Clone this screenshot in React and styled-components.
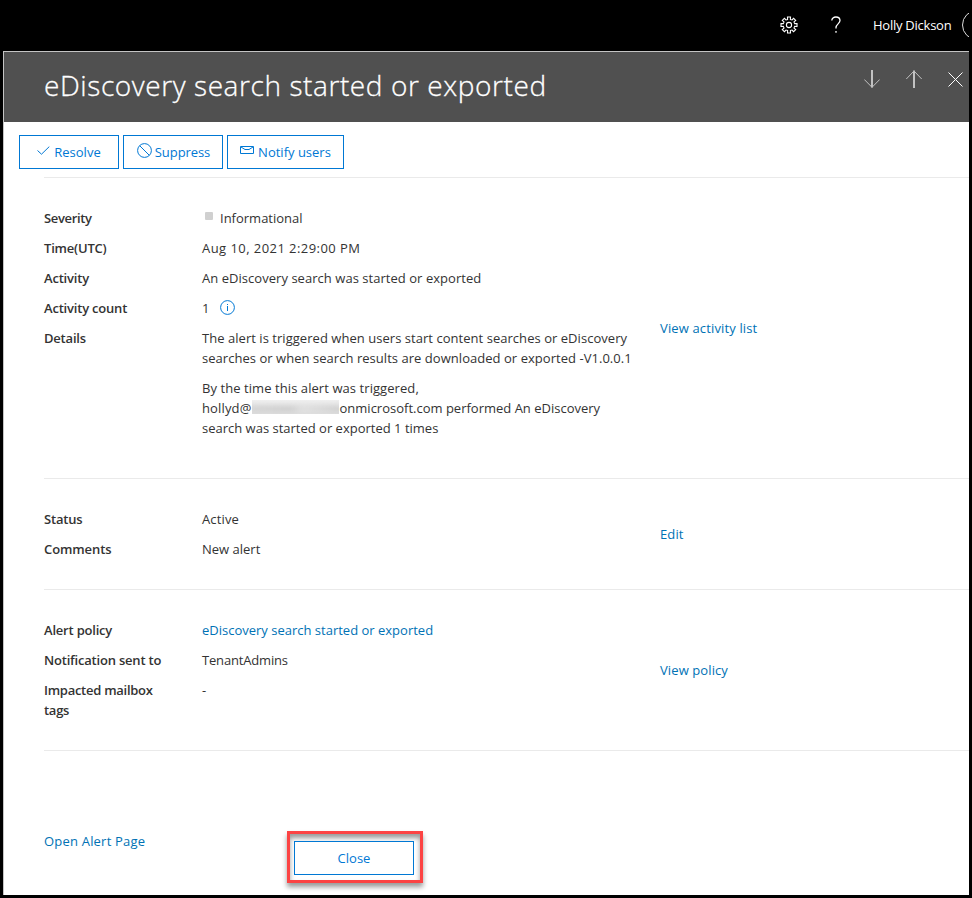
import React from "react";
import styled, { createGlobalStyle } from "styled-components";

const GlobalStyle = createGlobalStyle`
  * { box-sizing: border-box; }
  body {
    margin: 0;
    background: #000;
    color: #333;
    font: 13px/20px "Open Sans", "Noto Sans", sans-serif;
    overflow: hidden;
  }
`;

const Page = styled.div`
  width: 972px;
  height: 898px;
  display: flex;
  flex-direction: column;
  background: #000;
  overflow: hidden;
`;

const TopBar = styled.header`
  width: 969px;
  height: 51px;
  flex: none;
  display: flex;
  align-items: center;
  padding-left: 780px;
  padding-bottom: 1px;
  color: #fff;
  overflow: hidden;
`;

const Glyph = styled.svg`
  display: block;
  flex: none;
  fill: none;
  stroke: currentColor;
  stroke-width: ${(p) => p.$stroke || 1};
  margin: ${(p) => p.$margin || 0};
`;

const Text = styled.span`
  white-space: nowrap;
  letter-spacing: ${(p) => p.$track || 0}px;
`;

const UserName = styled(Text)`
  margin-left: 32px;
  width: 79px;
`;

const Avatar = styled.div`
  flex: none;
  width: 30px;
  height: 30px;
  margin-left: 11px;
  border: 1px solid #ddd;
  border-radius: 50%;
`;

const Panel = styled.main`
  width: 966px;
  height: 844px;
  margin-left: 3px;
  display: flex;
  flex-direction: column;
  background: #fff;
  border: solid #c4c4c4;
  border-width: 1px 0 0 1px;
`;

const TitleBar = styled.div`
  height: 70px;
  flex: none;
  display: flex;
  align-items: flex-start;
  padding-left: 40px;
  background: #505050;
  color: #fff;
`;

const Title = styled.h1`
  flex: 1;
  margin: 12px 0 0;
  font-size: 28px;
  line-height: 42px;
  font-weight: 300;
  letter-spacing: ${(p) => p.$track}px;
  -webkit-text-stroke: 0.3px #fff;
  white-space: nowrap;
`;

const Nav = styled.div`
  display: flex;
  padding-top: 18px;
  color: ${(p) => p.$color};
`;

const Toolbar = styled.div`
  display: flex;
  gap: 4px;
  padding: 13px 0 8px 15px;
  flex: none;
`;

const Button = styled.button`
  display: flex;
  align-items: center;
  justify-content: center;
  width: ${(p) => p.$width}px;
  height: 34px;
  padding: 0;
  border: 1px solid #0078d4;
  background: #fff;
  color: #0078d4;
  font: inherit;
`;

const Section = styled.section`
  flex: none;
  display: flex;
  align-items: center;
  margin-left: 40px;
  padding: 30px 0;
  min-height: ${(p) => p.$height}px;
  border-top: 1px solid #eaeaea;
`;

const Fields = styled.dl`
  margin: 0;
  width: 616px;
  display: grid;
  grid-template-columns: 158px 1fr;
  row-gap: 10px;
`;

const Label = styled.dt`
  width: 130px;
  color: #333;
  font-weight: 600;
  letter-spacing: ${(p) => p.$track || -0.2}px;
`;

const Value = styled.dd`
  margin: 0;
  display: flex;
  flex-direction: ${(p) => (p.$stack ? "column" : "row")};
  align-items: ${(p) => (p.$stack ? "flex-start" : "center")};
`;

const Paragraph = styled.p`
  margin: 0 0 10px;
`;

const Line = styled(Text)`
  display: flex;
  height: 20px;
`;

const Redacted = styled.span`
  width: 87px;
  height: 14px;
  margin: 2px 1px 0 0;
  overflow: hidden;
  background: linear-gradient(#efefef, #e2e2e2 60%, #dedede);

  &::before {
    content: "";
    display: block;
    width: 92px;
    height: 6px;
    margin: 6px 0 0 -3px;
    background: linear-gradient(90deg, #d4d4d4, #cecece 45%, #e0e0e0 58%, #dadada 75%, #cecece);
    filter: blur(2.5px);
  }
`;

const Swatch = styled.span`
  width: 8px;
  height: 8px;
  margin: -4px 7px 0 3px;
  border-radius: 1px;
  background: #d0d0d0;
`;

const Link = styled.a`
  color: #0072b5;
  white-space: nowrap;
  letter-spacing: ${(p) => p.$track || 0}px;
`;

const Footer = styled.footer`
  flex: 1;
  display: flex;
  align-items: flex-start;
  margin-left: 40px;
  padding-top: 80px;
  border-top: 1px solid #eaeaea;
`;

const OpenLink = styled(Link)`
  width: 243px;
`;

const Highlight = styled.div`
  width: 136px;
  height: 52px;
  padding: 7px 4px;
  border: 3px solid #fc4343;
  box-shadow: 0 4px 5px rgba(0, 0, 0, 0.4), inset 0 4px 5px rgba(0, 0, 0, 0.4);
`;

const teeth = Array.from({ length: 8 }, (_, i) => i * 45);

function Gear() {
  return (
    <Glyph width="18" height="18" viewBox="0 0 18 18" $stroke={1.1}>
      <circle cx="9" cy="9" r="2.6" />
      {teeth.map((a) => (
        <path
          key={a}
          transform={`rotate(${a} 9 9)`}
          d="M6.8 3.7 7.6 3.3 7.5 1H10.5L10.4 3.3 11.2 3.7"
        />
      ))}
    </Glyph>
  );
}

function Help() {
  return (
    <Glyph width="10" height="18" viewBox="0 0 10 18" $margin="0 0 0 33px" $stroke={1.3}>
      <path d="M.8 4.5C.8 2.2 2.6 1 4.9 1 7.4 1 9 2.3 9 4.6 9 7.8 5 8 5 11.6v1M5 15v1.7" />
    </Glyph>
  );
}

function Arrow({ up }) {
  return (
    <Glyph width="16" height="19" viewBox="0 0 16 19" $margin="0 26px 0 0">
      {up ? (
        <>
          <path d="M8 .5V18" strokeWidth="2" />
          <path d="M.3 9 8 1 15.7 9" />
        </>
      ) : (
        <>
          <path d="M8 0V17.5" strokeWidth="2" />
          <path d="M.3 9.5 8 17.3 15.7 9.5" />
        </>
      )}
    </Glyph>
  );
}

export default function App() {
  return (
    <>
      <GlobalStyle />
      <Page>
        <TopBar>
          <Gear />
          <Help />
          <UserName $track={-0.25}>Holly Dickson</UserName>
          <Avatar />
        </TopBar>
        <Panel>
          <TitleBar>
            <Title $track={0.59}>eDiscovery search started or exported</Title>
            <Nav $color="#c2c2c2">
              <Arrow />
              <Arrow up />
            </Nav>
            <Nav $color="#fff">
              <Glyph width="15" height="15" viewBox="0 0 15 15" $margin="2px 6px 0 0">
                <path d="M.5.5 14.5 14.5M14.5.5.5 14.5" />
              </Glyph>
            </Nav>
          </TitleBar>
          <Toolbar>
            <Button $width={100}>
              <Glyph width="13" height="9" viewBox="0 0 13 9" $margin="-4px 4px 0 0">
                <path d="M.5 4.5 4.5 8.2 12.3.6" />
              </Glyph>
              <Text>Resolve</Text>
            </Button>
            <Button $width={100}>
              <Glyph width="15" height="15" viewBox="0 0 15 15" $margin="-4px 3px 0 1px">
                <circle cx="7.5" cy="7.5" r="6.9" />
                <path d="M2.7 2.7 12.3 12.3" />
              </Glyph>
              <Text $track={-0.08}>Suppress</Text>
            </Button>
            <Button $width={117}>
              <Glyph width="14" height="8" viewBox="0 0 14 8" $margin="-4px 4px 0 0">
                <path d="M.5.5H13.5V7.5H.5ZM1 1 5 3.5H9L13 1" />
              </Glyph>
              <Text>Notify users</Text>
            </Button>
          </Toolbar>
          <Section $height={301}>
            <Fields>
              <Label $track={-0.35}>Severity</Label>
              <Value>
                <Swatch />
                <Text>Informational</Text>
              </Value>
              <Label>Time(UTC)</Label>
              <Value>
                <Text $track={0.44}>Aug 10, 2021 2:29:00 PM</Text>
              </Value>
              <Label>Activity</Label>
              <Value>
                <Text $track={0.04}>An eDiscovery search was started or exported</Text>
              </Value>
              <Label>Activity count</Label>
              <Value>
                <Text $track={0.5}>1</Text>
                <Glyph width="15" height="15" viewBox="0 0 15 15" $margin="-1px 0 0 10px">
                  <circle cx="7.5" cy="7.5" r="6.9" stroke="#0078d4" />
                  <path d="M7.5 6V11M7.5 4V5" stroke="#0078d4" />
                </Glyph>
              </Value>
              <Label>Details</Label>
              <Value $stack>
                <Paragraph>
                  <Line $track={0.04}>
                    The alert is triggered when users start content searches or eDiscovery
                  </Line>
                  <Line $track={0.04}>
                    searches or when search results are downloaded or exported -V1.0.0.1
                  </Line>
                </Paragraph>
                <Paragraph>
                  <Line $track={0.07}>By the time this alert was triggered,</Line>
                  <Line>
                    <Text $track={0.15}>hollyd@</Text>
                    <Redacted />
                    <Text>onmicrosoft.com performed An eDiscovery</Text>
                  </Line>
                  <Line>search was started or exported 1 times</Line>
                </Paragraph>
              </Value>
            </Fields>
            <Link $track={0.14}>View activity list</Link>
          </Section>
          <Section $height={111}>
            <Fields>
              <Label>Status</Label>
              <Value>
                <Text $track={0.15}>Active</Text>
              </Value>
              <Label $track={-0.1}>Comments</Label>
              <Value>
                <Text>New alert</Text>
              </Value>
            </Fields>
            <Link $track={0.1}>Edit</Link>
          </Section>
          <Section $height={161}>
            <Fields>
              <Label>Alert policy</Label>
              <Value>
                <Link>eDiscovery search started or exported</Link>
              </Value>
              <Label>Notification sent to</Label>
              <Value>
                <Text $track={-0.17}>TenantAdmins</Text>
              </Value>
              <Label $track={-0.27}>Impacted mailbox tags</Label>
              <Value $stack>
                <Text>-</Text>
              </Value>
            </Fields>
            <Link $track={0.1}>View policy</Link>
          </Section>
          <Footer>
            <OpenLink $track={0.2}>Open Alert Page</OpenLink>
            <Highlight>
              <Button $width={120}>
                <Text>Close</Text>
              </Button>
            </Highlight>
          </Footer>
        </Panel>
      </Page>
    </>
  );
}
